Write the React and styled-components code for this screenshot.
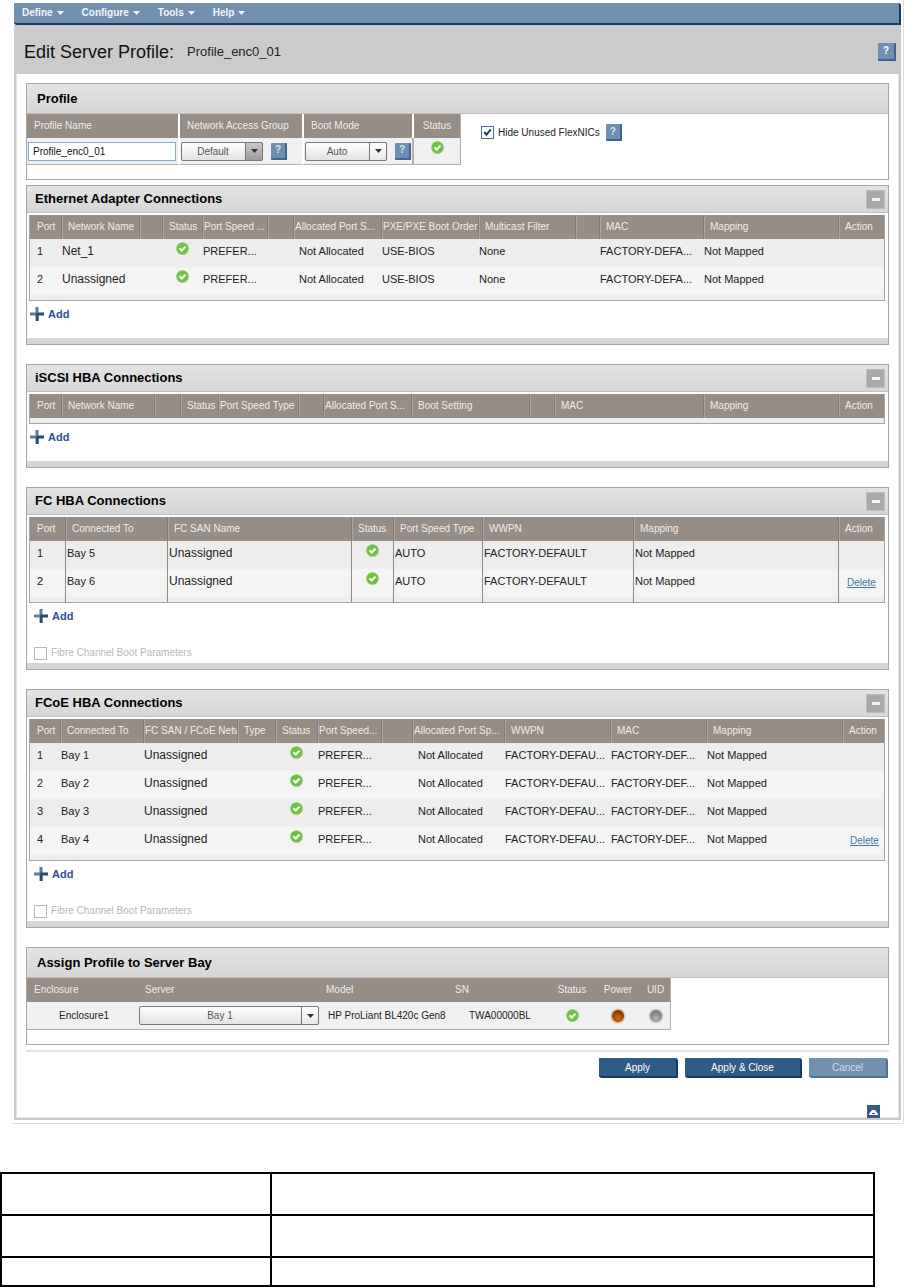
import React, { useState } from 'react';
import styled, { createGlobalStyle, css } from 'styled-components';

const GlobalStyle = createGlobalStyle`
  * {
    box-sizing: border-box;
  }

  body {
    margin: 0;
    background: #fff;
    color: #222;
    font-family: "Liberation Sans", Arial, sans-serif;
    font-size: 11px;
    line-height: 14px;
  }

  button, input, select {
    margin: 0;
    font-family: inherit;
    font-size: 10px;
  }
`;

const Outer = styled.div`
  margin: 0 1px 0 12px;
  padding: 3px 2px 3px 2px;
  border-right: 1px solid #dedede;
  border-bottom: 1px solid #dedede;
`;

const MenuBar = styled.nav`
  display: flex;
  align-items: center;
  gap: 18px;
  height: 22px;
  padding: 0 8px;
  background: #7391ad;
  border-right: 2px solid #173a6d;
  border-bottom: 2px solid #173a6d;
  border-radius: 0 3px 0 3px;
`;

const MenuButton = styled.button`
  display: flex;
  align-items: center;
  gap: 4px;
  padding: 0;
  border: 0;
  background: none;
  color: #f2f6fa;
  font-weight: bold;
  line-height: 14px;
`;

const TitleBar = styled.header`
  display: flex;
  align-items: center;
  gap: 13px;
  height: 49px;
  padding: 4px 5px 0 10px;
  background: #cbcbcb;

  h1 {
    margin: 0;
    font-size: 18px;
    font-weight: normal;
    line-height: 24px;
    color: #111;
  }

  span {
    flex: 1;
    font-size: 13px;
    line-height: 18px;
  }
`;

const Frame = styled.main`
  padding: 9px 10px 0;
  border: 2px solid #c8c8c8;
  border-top: 0;
  box-shadow: inset 1px 0 #e6e6e6, inset -1px -1px #e6e6e6;
`;

const Panel = styled.section`
  margin-bottom: ${p => p.$gap || 0}px;
  border: 1px solid #a6a6a6;
  background: #fff;
`;

const PanelHead = styled.div`
  display: flex;
  align-items: center;
  justify-content: space-between;
  height: ${p => (p.$tall ? 30 : 27)}px;
  padding: 0 3px 0 ${p => (p.$tall ? 10 : 8)}px;
  border-bottom: 1px solid #c0c0c0;
  background: linear-gradient(#e3e3e3, #d6d6d6);

  h2 {
    margin: 0;
    font-size: 13px;
    line-height: 18px;
    color: #000;
  }
`;

const Collapse = styled.button`
  display: flex;
  align-items: center;
  justify-content: center;
  width: 19px;
  height: 19px;
  padding: 0;
  border: 1px solid #bcbcbc;
  background: #a9a9a9;

  i {
    width: 8px;
    height: 3px;
    background: #f4f4f4;
  }
`;

const GridArea = styled.div`
  padding: 2px 3px 0 2px;
`;

const Grid = styled.table`
  width: 100%;
  table-layout: fixed;
  border: 1px solid #aaa49f;
  border-top: 0;
  border-spacing: 0;
`;

const Col = styled.col`
  width: ${p => (p.$w ? p.$w + 'px' : 'auto')};
`;

const Th = styled.th`
  height: 24px;
  padding: 0 0 0 ${p => (p.$tight ? 2 : 7)}px;
  background: #968d86;
  color: #efecea;
  font-size: 10px;
  font-weight: normal;
  text-align: left;
  white-space: nowrap;
  overflow: hidden;

  &:not(:first-child) {
    box-shadow: inset 1px 0 #857c75, inset 2px 0 #aca49e;
  }
`;

const Tr = styled.tr`
  background: ${p => (p.$alt ? '#f4f4f4' : '#ededed')};
`;

const Td = styled.td`
  height: 28px;
  padding: 5px 0 0 ${p => p.$pad}px;
  font-size: ${p => (p.$large ? 12 : 11)}px;
  vertical-align: top;
  white-space: nowrap;
  overflow: hidden;

  ${p => p.$center && css`
    padding: 3px 0 0;
    text-align: center;
  `}

  ${p => p.$lined && css`
    &:not(:first-child) {
      border-left: 1px solid #8c8c8c;
    }
  `}

  svg {
    display: inline-block;
    vertical-align: top;
  }
`;

const Filler = styled(Td)`
  height: 5px;
  padding: 0;
`;

const DeleteLink = styled.a`
  display: block;
  padding: 2px 0 0 7px;
  color: #4877a5;
  font-size: 10px;
  line-height: 14px;
`;

const Extras = styled.div`
  display: flex;
  flex-direction: column;
  align-items: flex-start;
  gap: 22px;
  height: ${p => (p.$boot ? 60 : 37)}px;
  padding: 5px 0 0 ${p => (p.$boot ? 7 : 3)}px;
`;

const AddButton = styled.button`
  display: flex;
  align-items: center;
  gap: 4px;
  height: 16px;
  padding: 0;
  border: 0;
  background: none;
  color: #2f4f93;
  font-size: 11px;
  font-weight: bold;
`;

const PanelFoot = styled.div`
  height: 6px;
  background: #d6d6d6;
`;

const CheckLabel = styled.label`
  display: flex;
  align-items: center;
  gap: 4px;
  font-size: 10px;
  color: ${p => (p.$off ? '#b4b9b9' : '#222')};
`;

const CheckBox = styled.span`
  display: grid;
  width: 13px;
  height: 13px;

  input, svg {
    grid-area: 1 / 1;
  }

  input {
    appearance: none;
    width: 13px;
    height: 13px;
    border: 1px solid #4d7295;
    background: #fff;
  }

  input:disabled {
    border-color: #b4b9b9;
  }

  svg {
    pointer-events: none;
  }
`;

const Help = styled.button`
  flex: none;
  width: ${p => (p.$big ? 18 : 16)}px;
  height: ${p => (p.$big ? 18 : 17)}px;
  padding: 0;
  border: 0;
  border-right: 2px solid #3d6696;
  border-bottom: 2px solid #3d6696;
  border-radius: 1px;
  background: #6f8fae;
  color: ${p => (p.$big ? '#fff' : '#d5e2ee')};
  font-weight: bold;
  line-height: 14px;
`;

const ProfileBody = styled.div`
  display: flex;
  align-items: flex-start;
  padding-bottom: 14px;
`;

const ProfileTable = styled.table`
  table-layout: fixed;
  width: ${p => p.$w}px;
  border-spacing: 0;

  th {
    height: 24px;
    padding: 0 0 0 7px;
    background: #968d86;
    color: #efecea;
    font-size: 10px;
    font-weight: normal;
    text-align: left;
    white-space: nowrap;
  }

  td {
    height: ${p => (p.$split ? 27 : 28)}px;
    padding: 0 0 0 1px;
    border-bottom: 1px solid #b9aea8;
    background: #f0f0f0;
    font-size: 10px;
  }

  ${p => p.$split && css`
    th:not(:first-child), td:not(:first-child) {
      border-left: 2px solid #fff;
    }

    td:last-child {
      border-left-color: #b9aea8;
    }
  `}

  th:last-child, td:last-child {
    border-right: 1px solid #b9aea8;
  }

  td.center, th.center {
    padding: 0;
    text-align: center;
  }

  td.top {
    padding: 2px 0 0;
    vertical-align: top;
    text-align: center;
  }

  td.inset {
    padding-left: 32px;
  }

  td.model {
    padding-left: 9px;
  }

  td.serial {
    padding-left: 21px;
  }

  svg {
    display: inline-block;
    vertical-align: middle;
  }
`;

const TextInput = styled.input`
  display: block;
  width: 148px;
  height: 19px;
  padding: 0 4px;
  border: 1px solid #86a9cc;
  background: #fff;
  color: #111;
`;

const Inline = styled.div`
  display: flex;
  align-items: center;
  gap: 8px;
`;

const HideRow = styled.div`
  display: flex;
  align-items: center;
  gap: 6px;
  padding: 10px 0 0 20px;
`;

const SelectBox = styled.span`
  display: grid;
  width: ${p => (p.$w ? p.$w + 'px' : '100%')};
  height: 19px;

  select, span {
    grid-area: 1 / 1;
  }

  select {
    appearance: none;
    width: 100%;
    height: 19px;
    padding: 0 18px 0 0;
    border: 1px solid #777;
    border-radius: 2px;
    background: linear-gradient(#fff, #e2e2e2);
    color: #555;
    text-align: center;
    text-align-last: center;
  }

  span {
    display: flex;
    align-items: center;
    justify-content: center;
    justify-self: end;
    width: 18px;
    border: 1px solid #777;
    border-radius: 0 2px 2px 0;
    background: ${p => (p.$dark ? 'linear-gradient(#c8c8c8, #9c9c9c)' : 'linear-gradient(#fff, #e8e8e8)')};
    pointer-events: none;
  }
`;

const Rule = styled.hr`
  height: 2px;
  margin: 5px 0 6px;
  border: 0;
  background: #dfe4e7;
`;

const Actions = styled.div`
  display: flex;
  justify-content: flex-end;
  gap: 7px;
  padding-right: 1px;
`;

const ActionButton = styled.button`
  width: ${p => p.$w}px;
  height: 20px;
  padding: 0;
  border: 0;
  border-right: 2px solid ${p => (p.$light ? '#4a74a0' : '#173a6d')};
  border-bottom: 2px solid ${p => (p.$light ? '#4a74a0' : '#173a6d')};
  border-radius: 0 3px 0 3px;
  background: ${p => (p.$light ? '#7391ad' : '#305b87')};
  color: ${p => (p.$light ? '#d3dfea' : '#fff')};
`;

const TopRow = styled.div`
  display: flex;
  justify-content: flex-end;
  padding: 27px 9px 0 0;
`;

const TopLink = styled.a`
  display: flex;
  align-items: center;
  justify-content: center;
  width: 13px;
  height: 13px;
  background: #305b87;
`;

const EmptyTable = styled.table`
  width: calc(100% - 30px);
  margin-top: 48px;
  table-layout: fixed;
  border-collapse: collapse;

  td {
    height: 42px;
    padding: 0;
    border: 2px solid #000;
  }

  td:first-child {
    width: 270px;
  }

  tr:last-child td {
    height: 29px;
  }
`;

const Ok = () => (
  <svg width="13" height="13" viewBox="0 0 13 13" role="img" aria-label="OK">
    <circle cx="6.5" cy="6.5" r="6.3" fill="#7cc653" />
    <circle cx="6.5" cy="6.5" r="5" fill="#70c045" />
    <path d="M3.5 6.3 L5.8 8.5 L9.5 4.6" fill="none" stroke="#fff" strokeWidth="2" />
  </svg>
);

const Led = ({ id, ring, light, dark }) => (
  <svg width="16" height="16" viewBox="0 0 16 16" role="img" aria-label={id}>
    <defs>
      <radialGradient id={id} cx="50%" cy="68%" r="60%">
        <stop offset="0" stopColor={light} />
        <stop offset="1" stopColor={dark} />
      </radialGradient>
    </defs>
    <circle cx="8" cy="8" r="7.8" fill={ring} opacity="0.35" />
    <circle cx="8" cy="8" r="6.9" fill={ring} opacity="0.6" />
    <circle cx="8" cy="8" r="6" fill={`url(#${id})`} />
  </svg>
);

const Caret = ({ color }) => (
  <svg width="7" height="4" viewBox="0 0 7 4" aria-hidden="true">
    <path d="M0 0 H7 L3.5 4 Z" fill={color} />
  </svg>
);

const Plus = () => (
  <svg width="14" height="14" viewBox="0 0 14 14" aria-hidden="true">
    <path d="M0 5.5 H5.5 V0 H8.5 V14 H5.5 V8.5 H0 Z" fill="#66798a" />
    <path d="M7 5.5 H14 V8.5 H8.5 V14 H6 V7 Z" fill="#274c72" />
  </svg>
);

const Select = ({ label, value, w, dark }) => (
  <SelectBox $w={w} $dark={dark}>
    <select aria-label={label} defaultValue={value}>
      <option>{value}</option>
    </select>
    <span><Caret color="#333" /></span>
  </SelectBox>
);

const Check = ({ label, checked, disabled }) => {
  const [on, setOn] = useState(!!checked);
  return (
    <CheckLabel $off={disabled}>
      <CheckBox>
        <input type="checkbox" checked={on} disabled={disabled} onChange={() => setOn(!on)} />
        {on && (
          <svg width="13" height="13" viewBox="0 0 13 13" aria-hidden="true">
            <path d="M3.2 6 L5.5 8.6 L9.8 3.4" fill="none" stroke="#1f3f78" strokeWidth="2" />
          </svg>
        )}
      </CheckBox>
      {label}
    </CheckLabel>
  );
};

// a column is [heading, width, options]; no width means it takes what is left
const port = w => ['Port', w, { pad: 7 }];
const status = w => ['Status', w, { center: true }];
const blank = w => ['', w, {}];
const tight = (label, w, pad) => [label, w, { tight: true, pad }];

const ethernetCols = [
  port(31), ['Network Name', 78, { large: true }], blank(23), status(40),
  tight('Port Speed ...', 65), blank(26), tight('Allocated Port S...', 88, 6),
  tight('PXE/PXE Boot Order', 97), ['Multicast Filter', 97, {}], blank(24),
  ['MAC', 104, {}], ['Mapping', 0, {}], ['Action', 46, {}],
];

const iscsiCols = [
  port(31), ['Network Name', 93, {}], blank(26), status(38),
  tight('Port Speed Type', 80), blank(25), tight('Allocated Port S...', 88, 6),
  ['Boot Setting', 118, {}], blank(25), ['MAC', 149, {}], ['Mapping', 0, {}], ['Action', 46, {}],
];

const fcCols = [
  port(35), ['Connected To', 102, {}], ['FC SAN Name', 184, { large: true }], status(42),
  ['Port Speed Type', 89, {}], ['WWPN', 151, {}], ['Mapping', 0, {}], ['Action', 46, {}],
];

const fcoeCols = [
  port(30), ['Connected To', 83, {}], ['FC SAN / FCoE Netw', 94, { tight: true, large: true }], ['Type', 38, {}],
  status(42), tight('Port Speed...', 64), blank(31), tight('Allocated Port Sp...', 92, 6),
  ['WWPN', 106, {}], ['MAC', 96, {}], ['Mapping', 0, {}], ['Action', 42, {}],
];

const ok = <Ok />;
const del = <DeleteLink href="#delete">Delete</DeleteLink>;

const ethernetRows = [['1', 'Net_1'], ['2', 'Unassigned']].map(([n, name]) => [
  n, name, '', ok, 'PREFER...', '', 'Not Allocated', 'USE-BIOS', 'None', '', 'FACTORY-DEFA...', 'Not Mapped', '',
]);

const fcRows = [
  ['1', 'Bay 5', 'Unassigned', ok, 'AUTO', 'FACTORY-DEFAULT', 'Not Mapped', ''],
  ['2', 'Bay 6', 'Unassigned', ok, 'AUTO', 'FACTORY-DEFAULT', 'Not Mapped', del],
];

const fcoeRows = [1, 2, 3, 4].map(n => [
  n, `Bay ${n}`, 'Unassigned', '', ok, 'PREFER...', '', 'Not Allocated',
  'FACTORY-DEFAU...', 'FACTORY-DEF...', 'Not Mapped', n === 4 ? del : '',
]);

const Connections = ({ title, cols, rows = [], lined, boot }) => (
  <Panel $gap={19}>
    <PanelHead>
      <h2>{title}</h2>
      <Collapse aria-label={`Collapse ${title}`}><i /></Collapse>
    </PanelHead>
    <GridArea>
      <Grid>
        <colgroup>
          {cols.map((c, i) => <Col key={i} $w={c[1]} />)}
        </colgroup>
        <thead>
          <tr>
            {cols.map((c, i) => <Th key={i} $tight={c[2].tight}>{c[0]}</Th>)}
          </tr>
        </thead>
        <tbody>
          {rows.map((row, r) => (
            <Tr key={r} $alt={r % 2 === 1}>
              {row.map((cell, i) => {
                const o = cols[i][2];
                return (
                  <Td key={i} $pad={o.pad || 1} $center={o.center} $large={o.large} $lined={lined}>
                    {cell}
                  </Td>
                );
              })}
            </Tr>
          ))}
          <Tr>
            {cols.map((c, i) => <Filler key={i} $lined={lined} />)}
          </Tr>
        </tbody>
      </Grid>
    </GridArea>
    <Extras $boot={boot}>
      <AddButton><Plus />Add</AddButton>
      {boot && <Check label="Fibre Channel Boot Parameters" disabled />}
    </Extras>
    <PanelFoot />
  </Panel>
);

const App = () => (
  <>
    <GlobalStyle />
    <Outer>
      <MenuBar>
        {['Define', 'Configure', 'Tools', 'Help'].map(m => (
          <MenuButton key={m}>{m}<Caret color="#f2f6fa" /></MenuButton>
        ))}
      </MenuBar>
      <TitleBar>
        <h1>Edit Server Profile:</h1>
        <span>Profile_enc0_01</span>
        <Help $big aria-label="Help">?</Help>
      </TitleBar>
      <Frame>
        <Panel $gap={5}>
          <PanelHead $tall><h2>Profile</h2></PanelHead>
          <ProfileBody>
            <ProfileTable $w={434} $split>
              <colgroup>
                <Col $w={151} /><Col $w={124} /><Col $w={110} /><Col $w={49} />
              </colgroup>
              <thead>
                <tr>
                  <th><label htmlFor="profile-name">Profile Name</label></th>
                  <th>Network Access Group</th>
                  <th>Boot Mode</th>
                  <th className="center">Status</th>
                </tr>
              </thead>
              <tbody>
                <tr>
                  <td><TextInput id="profile-name" defaultValue="Profile_enc0_01" /></td>
                  <td>
                    <Inline>
                      <Select label="Network Access Group" value="Default" w={82} dark />
                      <Help aria-label="Network access group help">?</Help>
                    </Inline>
                  </td>
                  <td>
                    <Inline>
                      <Select label="Boot Mode" value="Auto" w={82} />
                      <Help aria-label="Boot mode help">?</Help>
                    </Inline>
                  </td>
                  <td className="top"><Ok /></td>
                </tr>
              </tbody>
            </ProfileTable>
            <HideRow>
              <Check label="Hide Unused FlexNICs" checked />
              <Help aria-label="FlexNIC help">?</Help>
            </HideRow>
          </ProfileBody>
        </Panel>

        <Connections title="Ethernet Adapter Connections" cols={ethernetCols} rows={ethernetRows} />
        <Connections title="iSCSI HBA Connections" cols={iscsiCols} />
        <Connections title="FC HBA Connections" cols={fcCols} rows={fcRows} lined boot />
        <Connections title="FCoE HBA Connections" cols={fcoeCols} rows={fcoeRows} boot />

        <Panel>
          <PanelHead $tall><h2>Assign Profile to Server Bay</h2></PanelHead>
          <ProfileBody>
            <ProfileTable $w={644}>
              <colgroup>
                <Col $w={111} /><Col $w={181} /><Col $w={129} /><Col $w={101} />
                <Col $w={46} /><Col $w={46} /><Col $w={30} />
              </colgroup>
              <thead>
                <tr>
                  <th>Enclosure</th>
                  <th>Server</th>
                  <th>Model</th>
                  <th>SN</th>
                  <th className="center">Status</th>
                  <th className="center">Power</th>
                  <th className="center">UID</th>
                </tr>
              </thead>
              <tbody>
                <tr>
                  <td className="inset">Enclosure1</td>
                  <td><Select label="Server" value="Bay 1" /></td>
                  <td className="model">HP ProLiant BL420c Gen8</td>
                  <td className="serial">TWA00000BL</td>
                  <td className="center"><Ok /></td>
                  <td className="center"><Led id="power" ring="#d9a273" light="#d96a10" dark="#803a06" /></td>
                  <td className="center"><Led id="uid" ring="#c4c4c4" light="#b4b4b4" dark="#7a7a7a" /></td>
                </tr>
              </tbody>
            </ProfileTable>
          </ProfileBody>
        </Panel>

        <Rule />
        <Actions>
          <ActionButton $w={79}>Apply</ActionButton>
          <ActionButton $w={117}>Apply &amp; Close</ActionButton>
          <ActionButton $w={79} $light>Cancel</ActionButton>
        </Actions>
        <TopRow>
          <TopLink href="#top" aria-label="Back to top">
            <svg width="9" height="6" viewBox="0 0 9 6" aria-hidden="true">
              <path d="M0 6 V5 L3 1 H6 L9 5 V6 Z" fill="#fff" />
              <path d="M3 4.5 H6" stroke="#305b87" strokeWidth="1" />
            </svg>
          </TopLink>
        </TopRow>
      </Frame>
    </Outer>
    <EmptyTable>
      <tbody>
        <tr><td /><td /></tr>
        <tr><td /><td /></tr>
        <tr><td /><td /></tr>
      </tbody>
    </EmptyTable>
  </>
);

export default App;
